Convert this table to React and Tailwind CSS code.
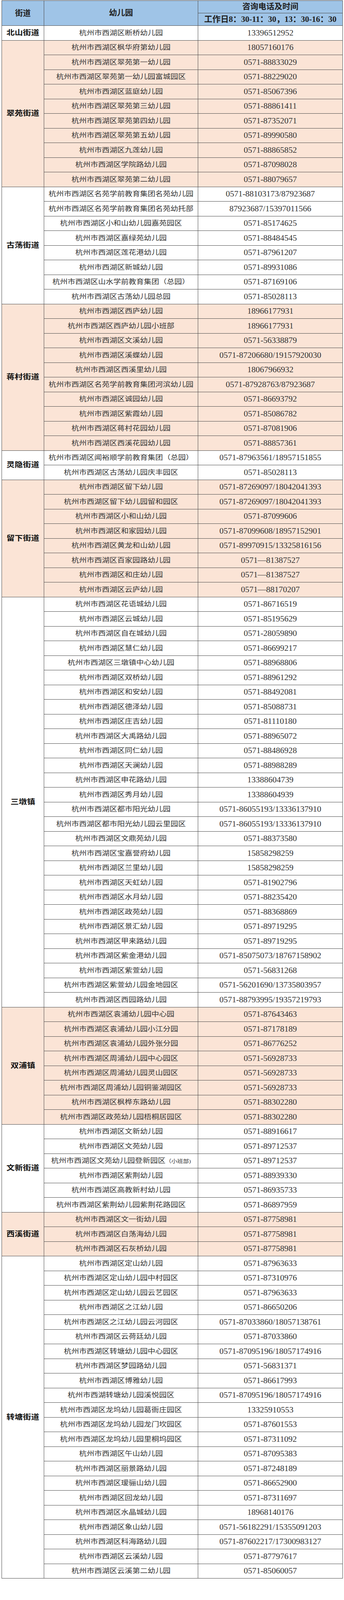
import React from "react";

const PEACH = "bg-[#fbe4d6]";
const WHITE = "bg-white";

const groups = [
  {
    street: "北山街道",
    bg: WHITE,
    rows: [["杭州市西湖区断桥幼儿园", "13396512952"]],
  },
  {
    street: "翠苑街道",
    bg: PEACH,
    rows: [
      ["杭州市西湖区枫华府第幼儿园", "18057160176"],
      ["杭州市西湖区翠苑第一幼儿园", "0571-88833029"],
      ["杭州市西湖区翠苑第一幼儿园富城园区", "0571-88229020"],
      ["杭州市西湖区蓝庭幼儿园", "0571-85067396"],
      ["杭州市西湖区翠苑第三幼儿园", "0571-88861411"],
      ["杭州市西湖区翠苑第四幼儿园", "0571-87352071"],
      ["杭州市西湖区翠苑第五幼儿园", "0571-89990580"],
      ["杭州市西湖区九莲幼儿园", "0571-88865852"],
      ["杭州市西湖区学院路幼儿园", "0571-87098028"],
      ["杭州市西湖区翠苑第二幼儿园", "0571-88079657"],
    ],
  },
  {
    street: "古荡街道",
    bg: WHITE,
    rows: [
      ["杭州市西湖区名苑学前教育集团名苑幼儿园", "0571-88103173/87923687"],
      ["杭州市西湖区名苑学前教育集团名苑幼托部", "87923687/15397011566"],
      ["杭州市西湖区小和山幼儿园嘉苑园区", "0571-85174625"],
      ["杭州市西湖区嘉绿苑幼儿园", "0571-88484545"],
      ["杭州市西湖区莲花港幼儿园", "0571-87961207"],
      ["杭州市西湖区新城幼儿园", "0571-89931086"],
      ["杭州市西湖区山水学前教育集团（总园）", "0571-87169106"],
      ["杭州市西湖区古荡幼儿园总园", "0571-85028113"],
    ],
  },
  {
    street: "蒋村街道",
    bg: PEACH,
    rows: [
      ["杭州市西湖区西庐幼儿园", "18966177931"],
      ["杭州市西湖区西庐幼儿园小班部", "18966177931"],
      ["杭州市西湖区文溪幼儿园", "0571-56338879"],
      ["杭州市西湖区溪蝶幼儿园", "0571-87206680/19157920030"],
      ["杭州市西湖区西溪里幼儿园", "18067966932"],
      ["杭州市西湖区名苑学前教育集团河滨幼儿园", "0571-87928763/87923687"],
      ["杭州市西湖区诚园幼儿园", "0571-86693792"],
      ["杭州市西湖区紫霞幼儿园", "0571-85086782"],
      ["杭州市西湖区蒋村花园幼儿园", "0571-87081906"],
      ["杭州市西湖区西溪花园幼儿园", "0571-88857361"],
    ],
  },
  {
    street: "灵隐街道",
    bg: WHITE,
    rows: [
      ["杭州市西湖区闻裕顺学前教育集团（总园）", "0571-87963561/18957151855"],
      ["杭州市西湖区古荡幼儿园庆丰园区", "0571-85028113"],
    ],
  },
  {
    street: "留下街道",
    bg: PEACH,
    rows: [
      ["杭州市西湖区留下幼儿园", "0571-87269097/18042041393"],
      ["杭州市西湖区留下幼儿园留和园区", "0571-87269097/18042041393"],
      ["杭州市西湖区小和山幼儿园", "0571-87099606"],
      ["杭州市西湖区和家园幼儿园", "0571-87099608/18957152901"],
      ["杭州市西湖区黄龙和山幼儿园", "0571-89970915/13325816156"],
      ["杭州市西湖区百家园路幼儿园", "0571—81387527"],
      ["杭州市西湖区和庄幼儿园", "0571—81387527"],
      ["杭州市西湖区云庐幼儿园", "0571—88170207"],
    ],
  },
  {
    street: "三墩镇",
    bg: WHITE,
    rows: [
      ["杭州市西湖区花语城幼儿园", "0571-86716519"],
      ["杭州市西湖区云城幼儿园", "0571-85195629"],
      ["杭州市西湖区自在城幼儿园", "0571-28059890"],
      ["杭州市西湖区慧仁幼儿园", "0571-86699217"],
      ["杭州市西湖区三墩镇中心幼儿园", "0571-88968806"],
      ["杭州市西湖区双桥幼儿园", "0571-88961292"],
      ["杭州市西湖区和安幼儿园", "0571-88492081"],
      ["杭州市西湖区德泽幼儿园", "0571-85088731"],
      ["杭州市西湖区庄吉幼儿园", "0571-81110180"],
      ["杭州市西湖区大禹路幼儿园", "0571-88965072"],
      ["杭州市西湖区同仁幼儿园", "0571-88486928"],
      ["杭州市西湖区天澜幼儿园", "0571-88988289"],
      ["杭州市西湖区申花路幼儿园", "13388604739"],
      ["杭州市西湖区秀月幼儿园", "13388604939"],
      ["杭州市西湖区都市阳光幼儿园", "0571-86055193/13336137910"],
      ["杭州市西湖区都市阳光幼儿园云里园区", "0571-86055193/13336137910"],
      ["杭州市西湖区文鼎苑幼儿园", "0571-88373580"],
      ["杭州市西湖区宝嘉誉府幼儿园", "15858298259"],
      ["杭州市西湖区兰里幼儿园", "15858298259"],
      ["杭州市西湖区天虹幼儿园", "0571-81902796"],
      ["杭州市西湖区水月幼儿园", "0571-88235420"],
      ["杭州市西湖区政苑幼儿园", "0571-88368869"],
      ["杭州市西湖区景汇幼儿园", "0571-89719295"],
      ["杭州市西湖区甲来路幼儿园", "0571-89719295"],
      ["杭州市西湖区紫金港幼儿园", "0571-85075073/18767158902"],
      ["杭州市西湖区紫萱幼儿园", "0571-56831268"],
      ["杭州市西湖区紫萱幼儿园金地园区", "0571-56201690/13735803957"],
      ["杭州市西湖区西园路幼儿园", "0571-88793995/19357219793"],
    ],
  },
  {
    street: "双浦镇",
    bg: PEACH,
    rows: [
      ["杭州市西湖区袁浦幼儿园中心园", "0571-87643463"],
      ["杭州市西湖区袁浦幼儿园小江分园", "0571-87178189"],
      ["杭州市西湖区袁浦幼儿园外张分园", "0571-86776252"],
      ["杭州市西湖区周浦幼儿园中心园区", "0571-56928733"],
      ["杭州市西湖区周浦幼儿园灵山园区", "0571-56928733"],
      ["杭州市西湖区周浦幼儿园铜鉴湖园区", "0571-56928733"],
      ["杭州市西湖区枫桦东路幼儿园", "0571-88302280"],
      ["杭州市西湖区政苑幼儿园梧桐居园区", "0571-88302280"],
    ],
  },
  {
    street: "文新街道",
    bg: WHITE,
    rows: [
      ["杭州市西湖区文新幼儿园", "0571-88916617"],
      ["杭州市西湖区文苑幼儿园", "0571-89712537"],
      ["杭州市西湖区文苑幼儿园登新园区", "0571-89712537", "（小班部)"],
      ["杭州市西湖区紫荆幼儿园", "0571-88939330"],
      ["杭州市西湖区高教新村幼儿园", "0571-86935733"],
      ["杭州市西湖区紫荆幼儿园紫荆花路园区", "0571-86897959"],
    ],
  },
  {
    street: "西溪街道",
    bg: PEACH,
    rows: [
      ["杭州市西湖区文一街幼儿园", "0571-87758981"],
      ["杭州市西湖区白荡海幼儿园", "0571-87758981"],
      ["杭州市西湖区石灰桥幼儿园", "0571-87758981"],
    ],
  },
  {
    street: "转塘街道",
    bg: WHITE,
    rows: [
      ["杭州市西湖区定山幼儿园", "0571-87963633"],
      ["杭州市西湖区定山幼儿园中村园区", "0571-87310976"],
      ["杭州市西湖区定山幼儿园云艺园区", "0571-87963633"],
      ["杭州市西湖区之江幼儿园", "0571-86650206"],
      ["杭州市西湖区之江幼儿园云河园区", "0571-87033860/18057138761"],
      ["杭州市西湖区云荷廷幼儿园", "0571-87033860"],
      ["杭州市西湖区转塘幼儿园中心园区", "0571-87095196/18057174916"],
      ["杭州市西湖区梦园路幼儿园", "0571-56831371"],
      ["杭州市西湖区博雅幼儿园", "0571-86617993"],
      ["杭州市西湖转塘幼儿园溪悦园区", "0571-87095196/18057174916"],
      ["杭州市西湖区龙坞幼儿园葛衙庄园区", "13325910553"],
      ["杭州市西湖区龙坞幼儿园龙门坎园区", "0571-87601553"],
      ["杭州市西湖区龙坞幼儿园里桐坞园区", "0571-87311092"],
      ["杭州市西湖区午山幼儿园", "0571-87095383"],
      ["杭州市西湖区丽景路幼儿园", "0571-87248189"],
      ["杭州市西湖区瑷骊山幼儿园", "0571-86652900"],
      ["杭州市西湖区回龙幼儿园", "0571-87311697"],
      ["杭州市西湖区水晶城幼儿园", "18968140176"],
      ["杭州市西湖区象山幼儿园", "0571-56182291/15355091203"],
      ["杭州市西湖区科海路幼儿园", "0571-87602217/17300983127"],
      ["杭州市西湖区云溪幼儿园", "0571-87797617"],
      ["杭州市西湖区云溪第二幼儿园", "0571-85060057"],
    ],
  },
];

const cell = "border border-[#4a4a4a] text-center align-middle p-0 leading-none";

const App = () => {
  return (
    <div className="w-[880px] bg-white pl-[4px] pt-[1px] pb-[6px] font-['Liberation_Serif','Noto_Sans_CJK_SC',serif]">
      <table className="w-[872px] table-fixed border-collapse">
        <colgroup>
          <col className="w-[108px]" />
          <col className="w-[394px]" />
          <col className="w-[370px]" />
        </colgroup>
        <thead className="bg-[#9fc4e7] text-[#1f1f1f]">
          <tr className="h-[32px]">
            <th rowSpan={2} className={`${cell} text-[20px] font-bold`}>
              街道
            </th>
            <th rowSpan={2} className={`${cell} text-[20.5px] font-bold`}>
              幼儿园
            </th>
            <th className={`${cell} text-[20.5px] font-bold`}>咨询电话及时间</th>
          </tr>
          <tr className="h-[32px]">
            <th className={`${cell} whitespace-nowrap text-[21px] font-bold`}>
              工作日8：30-11：30，13：30-16：30
            </th>
          </tr>
        </thead>
        <tbody>
          {groups.map((g) =>
            g.rows.map(([name, phone, note], i) => (
              <tr key={g.street + name} className={`h-[37.5px] ${g.bg}`}>
                {i === 0 && (
                  <td
                    rowSpan={g.rows.length}
                    className={`${cell} text-[21px] font-bold text-[#111]`}
                  >
                    <span className="inline-block scale-y-[0.88]">{g.street}</span>
                  </td>
                )}
                <td className={`${cell} whitespace-nowrap text-[19.5px] text-[#333]`}>
                  <span className="inline-block scale-y-[0.85]">
                    {name}
                    {note && <span className="text-[15px]">{note}</span>}
                  </span>
                </td>
                <td className={`${cell} whitespace-nowrap text-[21.5px] text-[#333]`}>
                  {phone}
                </td>
              </tr>
            ))
          )}
        </tbody>
      </table>
    </div>
  );
};

export default App;
